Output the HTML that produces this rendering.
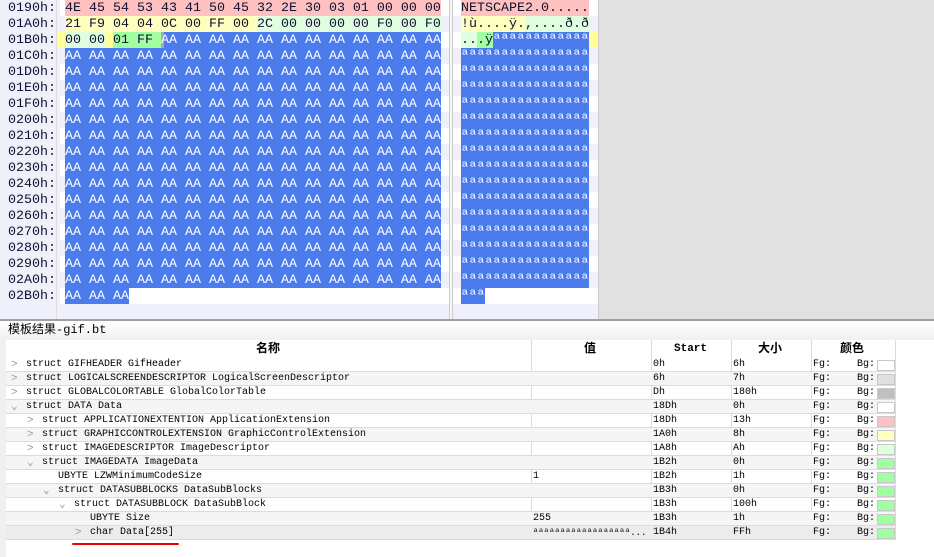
<!DOCTYPE html>
<html><head><meta charset="utf-8"><style>
*{margin:0;padding:0;box-sizing:border-box}
body{width:934px;height:557px;overflow:hidden;background:#fff;font-family:"Liberation Mono","Noto Sans CJK SC",monospace;position:relative}
.a{position:absolute}
.hx{position:absolute;font-size:13.33px;line-height:16px;height:16px;white-space:pre;color:#101030;padding-top:1px}
.w{color:#fff}
.t{position:absolute;left:6px;width:889px;height:14px;font-size:10px;line-height:14px;white-space:pre;border-bottom:1px solid #dcdcdc;color:#000}
.t span{position:absolute;top:0}
.sw{position:absolute;left:871px;top:2px;width:18px;height:11px;border:1px solid #c8c8c8}
.ar{position:absolute;top:0;color:#999;font-size:11px}
</style></head><body>
<div class="a" style="left:0;top:0;width:598px;height:320px;background:#f0f0fa"></div>
<div class="a" style="left:598px;top:0;width:336px;height:320px;background:#e1e1e1;border-left:1px solid #ccc"></div>
<div class="a" style="left:60px;top:0;width:538px;height:304px;background:repeating-linear-gradient(#fff 0 16px,#f0f0fa 16px 32px)"></div>
<div class="a" style="left:449px;top:0;width:4px;height:320px;border-left:1px solid #ccc;border-right:1px solid #ccc;background:#f6f6f6"></div>
<div class="a" style="left:0;top:0;width:60px;height:320px;background:#f0f0fa"></div>
<div class="a" style="left:56px;top:0;width:1px;height:320px;background:#ddd"></div>
<div class="a" style="left:65px;top:0;width:376px;height:16px;background:#ffc0c0"></div>
<div class="a" style="left:461px;top:0;width:128px;height:16px;background:#ffc0c0"></div>
<div class="a" style="left:65px;top:16px;width:192px;height:16px;background:#ffffc0"></div>
<div class="a" style="left:257px;top:16px;width:184px;height:16px;background:#e0ffe0"></div>
<div class="a" style="left:461px;top:16px;width:64px;height:16px;background:#ffffc0"></div>
<div class="a" style="left:525px;top:16px;width:64px;height:16px;background:#e0ffe0"></div>
<div class="a" style="left:57px;top:32px;width:8px;height:16px;background:#ffff99"></div>
<div class="a" style="left:65px;top:32px;width:40px;height:16px;background:#e0ffe0"></div>
<div class="a" style="left:105px;top:32px;width:8px;height:16px;background:#ffff99"></div>
<div class="a" style="left:113px;top:32px;width:48px;height:16px;background:#a0ffa0"></div>
<div class="a" style="left:161px;top:32px;width:3px;height:16px;background:#aaa"></div>
<div class="a" style="left:164px;top:32px;width:277px;height:16px;background:#4b7bec"></div>
<div class="a" style="left:461px;top:32px;width:16px;height:16px;background:#e0ffe0"></div>
<div class="a" style="left:477px;top:32px;width:16px;height:16px;background:#a0ffa0"></div>
<div class="a" style="left:493px;top:32px;width:96px;height:16px;background:#4b7bec"></div>
<div class="a" style="left:589px;top:32px;width:9px;height:16px;background:#ffff99"></div>
<div class="a" style="left:65px;top:48px;width:376px;height:240px;background:#4b7bec"></div>
<div class="a" style="left:461px;top:48px;width:128px;height:240px;background:#4b7bec"></div>
<div class="a" style="left:65px;top:288px;width:64px;height:16px;background:#4b7bec"></div>
<div class="a" style="left:461px;top:288px;width:24px;height:16px;background:#4b7bec"></div>
<div class="hx" style="left:8px;top:0;line-height:16px;height:auto">0190h:
01A0h:
01B0h:
01C0h:
01D0h:
01E0h:
01F0h:
0200h:
0210h:
0220h:
0230h:
0240h:
0250h:
0260h:
0270h:
0280h:
0290h:
02A0h:
02B0h:</div>
<div class="hx" style="left:65px;top:0">4E 45 54 53 43 41 50 45 32 2E 30 03 01 00 00 00</div>
<div class="hx" style="left:65px;top:16px">21 F9 04 04 0C 00 FF 00 2C 00 00 00 00 F0 00 F0</div>
<div class="hx" style="left:65px;top:32px">00 00 01 FF <span class="w">AA AA AA AA AA AA AA AA AA AA AA AA</span></div>
<div class="hx w" style="left:65px;top:48px;height:auto">AA AA AA AA AA AA AA AA AA AA AA AA AA AA AA AA
AA AA AA AA AA AA AA AA AA AA AA AA AA AA AA AA
AA AA AA AA AA AA AA AA AA AA AA AA AA AA AA AA
AA AA AA AA AA AA AA AA AA AA AA AA AA AA AA AA
AA AA AA AA AA AA AA AA AA AA AA AA AA AA AA AA
AA AA AA AA AA AA AA AA AA AA AA AA AA AA AA AA
AA AA AA AA AA AA AA AA AA AA AA AA AA AA AA AA
AA AA AA AA AA AA AA AA AA AA AA AA AA AA AA AA
AA AA AA AA AA AA AA AA AA AA AA AA AA AA AA AA
AA AA AA AA AA AA AA AA AA AA AA AA AA AA AA AA
AA AA AA AA AA AA AA AA AA AA AA AA AA AA AA AA
AA AA AA AA AA AA AA AA AA AA AA AA AA AA AA AA
AA AA AA AA AA AA AA AA AA AA AA AA AA AA AA AA
AA AA AA AA AA AA AA AA AA AA AA AA AA AA AA AA
AA AA AA AA AA AA AA AA AA AA AA AA AA AA AA AA
AA AA AA</div>
<div class="hx" style="left:461px;top:0">NETSCAPE2.0.....</div>
<div class="hx" style="left:461px;top:16px">!ù....ÿ.,....ð.ð</div>
<div class="hx" style="left:461px;top:32px">...ÿ<span class="w">ªªªªªªªªªªªª</span></div>
<div class="hx w" style="left:461px;top:48px;height:auto">ªªªªªªªªªªªªªªªª
ªªªªªªªªªªªªªªªª
ªªªªªªªªªªªªªªªª
ªªªªªªªªªªªªªªªª
ªªªªªªªªªªªªªªªª
ªªªªªªªªªªªªªªªª
ªªªªªªªªªªªªªªªª
ªªªªªªªªªªªªªªªª
ªªªªªªªªªªªªªªªª
ªªªªªªªªªªªªªªªª
ªªªªªªªªªªªªªªªª
ªªªªªªªªªªªªªªªª
ªªªªªªªªªªªªªªªª
ªªªªªªªªªªªªªªªª
ªªªªªªªªªªªªªªªª
ªªª</div>
<div class="a" style="left:0;top:319px;width:934px;height:2px;background:#a0a0a0"></div>
<div class="a" style="left:0;top:321px;width:934px;height:19px;background:linear-gradient(#fff,#f0f0f0)"></div>
<div class="a" style="left:8px;top:322px;font-size:12px;line-height:16px;font-family:'Liberation Mono','Noto Sans CJK SC',monospace">模板结果-gif.bt</div>
<div class="a" style="left:0;top:340px;width:6px;height:217px;background:#f0f0f0"></div>
<div class="a" style="left:6px;top:340px;width:889px;height:18px;font-size:12px;font-weight:bold;line-height:18px">
<span class="a" style="left:250px">名称</span><span class="a" style="left:578px">值</span><span class="a" style="left:668px;font-size:11px">Start</span><span class="a" style="left:752px">大小</span><span class="a" style="left:834px">颜色</span></div>
<div class="a" style="left:531px;top:340px;width:1px;height:200px;background:#dcdcdc"></div>
<div class="a" style="left:651px;top:340px;width:1px;height:200px;background:#dcdcdc"></div>
<div class="a" style="left:731px;top:340px;width:1px;height:200px;background:#dcdcdc"></div>
<div class="a" style="left:811px;top:340px;width:1px;height:200px;background:#dcdcdc"></div>
<div class="a" style="left:895px;top:340px;width:1px;height:200px;background:#dcdcdc"></div>

<div class="t" style="top:358px"><span class="ar" style="left:5px">&gt;</span><span style="left:20px">struct GIFHEADER GifHeader</span><span style="left:647px">0h</span><span style="left:727px">6h</span><span style="left:807px">Fg:</span><span style="left:851px">Bg:</span><i class="sw" style="background:#fff"></i></div>
<div class="t" style="top:372px;background:#f5f5f5"><span class="ar" style="left:5px">&gt;</span><span style="left:20px">struct LOGICALSCREENDESCRIPTOR LogicalScreenDescriptor</span><span style="left:647px">6h</span><span style="left:727px">7h</span><span style="left:807px">Fg:</span><span style="left:851px">Bg:</span><i class="sw" style="background:#e0e0e0"></i></div>
<div class="t" style="top:386px"><span class="ar" style="left:5px">&gt;</span><span style="left:20px">struct GLOBALCOLORTABLE GlobalColorTable</span><span style="left:647px">Dh</span><span style="left:727px">180h</span><span style="left:807px">Fg:</span><span style="left:851px">Bg:</span><i class="sw" style="background:#c0c0c0"></i></div>
<div class="t" style="top:400px;background:#f5f5f5"><span class="ar" style="left:5px">⌄</span><span style="left:20px">struct DATA Data</span><span style="left:647px">18Dh</span><span style="left:727px">0h</span><span style="left:807px">Fg:</span><span style="left:851px">Bg:</span><i class="sw" style="background:#fff"></i></div>
<div class="t" style="top:414px"><span class="ar" style="left:21px">&gt;</span><span style="left:36px">struct APPLICATIONEXTENTION ApplicationExtension</span><span style="left:647px">18Dh</span><span style="left:727px">13h</span><span style="left:807px">Fg:</span><span style="left:851px">Bg:</span><i class="sw" style="background:#ffc0c0"></i></div>
<div class="t" style="top:428px;background:#f5f5f5"><span class="ar" style="left:21px">&gt;</span><span style="left:36px">struct GRAPHICCONTROLEXTENSION GraphicControlExtension</span><span style="left:647px">1A0h</span><span style="left:727px">8h</span><span style="left:807px">Fg:</span><span style="left:851px">Bg:</span><i class="sw" style="background:#ffffc0"></i></div>
<div class="t" style="top:442px"><span class="ar" style="left:21px">&gt;</span><span style="left:36px">struct IMAGEDESCRIPTOR ImageDescriptor</span><span style="left:647px">1A8h</span><span style="left:727px">Ah</span><span style="left:807px">Fg:</span><span style="left:851px">Bg:</span><i class="sw" style="background:#e0ffe0"></i></div>
<div class="t" style="top:456px;background:#f5f5f5"><span class="ar" style="left:21px">⌄</span><span style="left:36px">struct IMAGEDATA ImageData</span><span style="left:647px">1B2h</span><span style="left:727px">0h</span><span style="left:807px">Fg:</span><span style="left:851px">Bg:</span><i class="sw" style="background:#a0ffa0"></i></div>
<div class="t" style="top:470px"><span style="left:52px">UBYTE LZWMinimumCodeSize</span><span style="left:527px">1</span><span style="left:647px">1B2h</span><span style="left:727px">1h</span><span style="left:807px">Fg:</span><span style="left:851px">Bg:</span><i class="sw" style="background:#a0ffa0"></i></div>
<div class="t" style="top:484px;background:#f5f5f5"><span class="ar" style="left:37px">⌄</span><span style="left:52px">struct DATASUBBLOCKS DataSubBlocks</span><span style="left:647px">1B3h</span><span style="left:727px">0h</span><span style="left:807px">Fg:</span><span style="left:851px">Bg:</span><i class="sw" style="background:#a0ffa0"></i></div>
<div class="t" style="top:498px"><span class="ar" style="left:53px">⌄</span><span style="left:68px">struct DATASUBBLOCK DataSubBlock</span><span style="left:647px">1B3h</span><span style="left:727px">100h</span><span style="left:807px">Fg:</span><span style="left:851px">Bg:</span><i class="sw" style="background:#a0ffa0"></i></div>
<div class="t" style="top:512px;background:#f5f5f5"><span style="left:84px">UBYTE Size</span><span style="left:527px">255</span><span style="left:647px">1B3h</span><span style="left:727px">1h</span><span style="left:807px">Fg:</span><span style="left:851px">Bg:</span><i class="sw" style="background:#a0ffa0"></i></div>
<div class="t" style="top:526px;background:#ececec"><span class="ar" style="left:69px">&gt;</span><span style="left:84px">char Data[255]</span><span style="left:527px;font-size:9px">ªªªªªªªªªªªªªªªªªª...</span><span style="left:647px">1B4h</span><span style="left:727px">FFh</span><span style="left:807px">Fg:</span><span style="left:851px">Bg:</span><i class="sw" style="background:#a0ffa0"></i></div>
<div class="a" style="left:72px;top:543px;width:107px;height:2px;background:#e00;border-radius:1px"></div>
</body></html>
